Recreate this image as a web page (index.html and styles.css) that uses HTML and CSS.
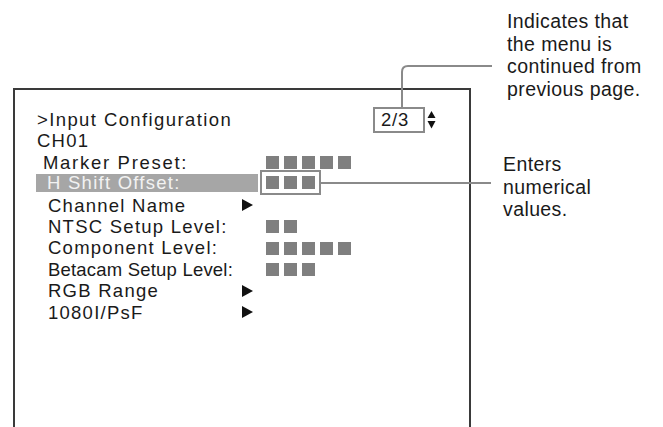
FILE: index.html
```html
<!DOCTYPE html>
<html lang="en">
<head>
<meta charset="utf-8">
<title>Input Configuration menu</title>
<link rel="stylesheet" href="styles.css">
</head>
<body>
<div class="page">
  <div class="screen">
    <div class="row header">
      <span class="title">&gt;Input Configuration</span>
      <span class="pager">
        <span class="pagebox">2/3</span>
        <svg class="updown" width="9" height="20" viewBox="0 0 9 20"><polygon points="4.5,1 8.5,8 0.5,8" fill="#111"/><polygon points="0.5,11 8.5,11 4.5,18.5" fill="#111"/></svg>
      </span>
    </div>
    <div class="row"><span class="label flush">CH01</span></div>
    <div class="row"><span class="label marker">Marker Preset:</span><span class="arrow"></span><span class="sq"><i></i><i></i><i></i><i></i><i></i></span></div>
    <div class="row"><span class="label selected">H Shift Offset:</span><span class="sq framed"><i></i><i></i><i></i></span></div>
    <div class="row"><span class="label">Channel Name</span><span class="arrow"><svg width="11" height="12" viewBox="0 0 11 12"><polygon points="0,0 11,6 0,12" fill="#111"/></svg></span></div>
    <div class="row"><span class="label">NTSC Setup Level:</span><span class="arrow"></span><span class="sq"><i></i><i></i></span></div>
    <div class="row"><span class="label">Component Level:</span><span class="arrow"></span><span class="sq"><i></i><i></i><i></i><i></i><i></i></span></div>
    <div class="row"><span class="label tight">Betacam Setup Level:</span><span class="arrow"></span><span class="sq"><i></i><i></i><i></i></span></div>
    <div class="row"><span class="label">RGB Range</span><span class="arrow"><svg width="11" height="12" viewBox="0 0 11 12"><polygon points="0,0 11,6 0,12" fill="#111"/></svg></span></div>
    <div class="row"><span class="label">1080I/PsF</span><span class="arrow"><svg width="11" height="12" viewBox="0 0 11 12"><polygon points="0,0 11,6 0,12" fill="#111"/></svg></span></div>
  </div>

  <svg class="leaders" width="663" height="427" viewBox="0 0 663 427">
    <path d="M402 108 V72 Q402 66 408 66 H492" fill="none" stroke="#8a8a8a" stroke-width="2"/>
    <path d="M321 183 H491" fill="none" stroke="#8a8a8a" stroke-width="2"/>
  </svg>
  <p class="note note-page">Indicates that<br>the menu is<br>continued from<br>previous page.</p>
  <p class="note note-value">Enters<br>numerical<br>values.</p>
</div>
</body>
</html>
```

FILE: styles.css
```css
html, body {
  margin: 0;
  padding: 0;
  overflow: hidden;
  background: #fff;
}

body {
  font-family: "Liberation Sans", Arial, Helvetica, sans-serif;
  color: #1a1a1a;
}

.page {
  position: relative;
  width: 663px;
  height: 427px;
  padding: 88px 0 0 13px;
  box-sizing: border-box;
  overflow: hidden;
}

.screen {
  width: 433px;
  height: 360px;
  border: 2px solid #3a3a3a;
  border-bottom: none;
  padding: 19px 0 0 21px;
  box-sizing: content-box;
  font-size: 18.5px;
  letter-spacing: 1.25px;
}

.row {
  display: grid;
  grid-template-columns: 206px 24px 1fr;
  align-items: center;
  height: 21.4px;
  line-height: 21.4px;
  white-space: nowrap;
}

.header {
  display: flex;
  justify-content: space-between;
  align-items: center;
  padding-right: 33px;
}

.title {
  padding-left: 1px;
  letter-spacing: 1.4px;
}

.pager {
  display: flex;
  align-items: center;
  gap: 2px;
}

.pagebox {
  width: 42px;
  height: 22px;
  line-height: 22px;
  border: 2px solid #8a8a8a;
  padding-left: 6px;
  letter-spacing: 0.8px;
  background: #fff;
}

.updown {
  display: block;
}

.label {
  padding-left: 12px;
}

.label.flush {
  padding-left: 1px;
}

.label.marker {
  padding-left: 7px;
  letter-spacing: 1.7px;
}

.label.tight {
  letter-spacing: 0.2px;
}

.label.selected {
  grid-column: 1 / 3;
  width: 222px;
  box-sizing: border-box;
  height: 18px;
  line-height: 18px;
  padding-left: 11px;
  margin-top: -2px;
  background: #a6a6a6;
  color: #f2f2f2;
}

.arrow {
  display: flex;
  align-items: center;
}

.arrow svg {
  display: block;
}

.sq {
  display: flex;
  gap: 5px;
  align-items: center;
  width: max-content;
}

.sq i {
  display: block;
  width: 13px;
  height: 13px;
  background: #7f7f7f;
}

.sq.framed {
  outline: 2px solid #8a8a8a;
  outline-offset: 4px;
  margin-top: -2px;
}

.leaders {
  position: absolute;
  left: 0;
  top: 0;
  pointer-events: none;
}

.note {
  position: absolute;
  margin: 0;
  font-size: 19.5px;
  line-height: 22.7px;
  letter-spacing: 0.4px;
  color: #1a1a1a;
}

.note-page {
  left: 507px;
  top: 10px;
}

.note-value {
  left: 503px;
  top: 153px;
}
```
